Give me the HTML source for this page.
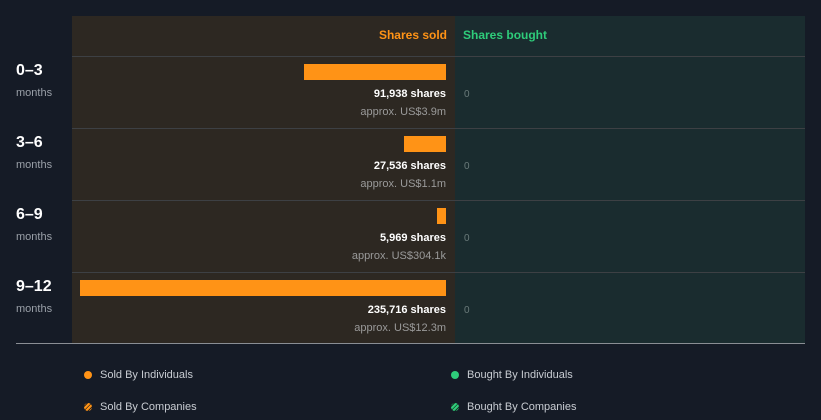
<!DOCTYPE html><html><head><style>
body{margin:0;width:821px;height:420px;background:#151b26;font-family:"Liberation Sans",sans-serif;position:relative;overflow:hidden}
div,span{position:absolute}
.t{white-space:nowrap}
.sold{left:72px;top:16px;width:383px;height:327px;background:#2d2822}
.bought{left:455px;top:16px;width:350px;height:327px;background:#1a2c2f}
.lnl{left:72px;width:733px;height:1px;background:#3d4044}
.bar{background:#ff9316;height:16px}
.sh{right:375px;font-size:11px;color:#fff;font-weight:bold}
.ap{right:375px;font-size:11px;color:#9a9a9a}
.z{left:464px;font-size:10px;color:#6a7a7a}
.lab{left:16px;font-size:16px;font-weight:bold;color:#fff}
.mo{left:16px;font-size:11px;color:#9aa0a8}
.lg{font-size:11px;color:#c8ccd2}
.dot{width:8px;height:8px;border-radius:50%}
</style></head><body>
<div class="sold"></div><div class="bought"></div>
<div class="t" style="right:374px;top:28px;font-size:12px;font-weight:bold;color:#ff9316">Shares sold</div>
<div class="t" style="left:463px;top:28px;font-size:12px;font-weight:bold;color:#2ecc7a">Shares bought</div>
<div class="lnl" style="top:56px"></div><div class="lnl" style="top:128px"></div><div class="lnl" style="top:200px"></div><div class="lnl" style="top:272px"></div>
<div style="left:16px;top:343px;width:789px;height:1px;background:#8a8e94"></div>

<div class="t lab" style="top:62px">0–3</div><div class="t mo" style="top:87px">months</div>
<div class="bar" style="left:304px;width:142px;top:64px"></div>
<div class="t sh" style="top:88px">91,938 shares</div><div class="t ap" style="top:106px">approx. US$3.9m</div><div class="t z" style="top:89px">0</div>

<div class="t lab" style="top:134px">3–6</div><div class="t mo" style="top:159px">months</div>
<div class="bar" style="left:404px;width:42px;top:136px"></div>
<div class="t sh" style="top:160px">27,536 shares</div><div class="t ap" style="top:178px">approx. US$1.1m</div><div class="t z" style="top:161px">0</div>

<div class="t lab" style="top:206px">6–9</div><div class="t mo" style="top:231px">months</div>
<div class="bar" style="left:437px;width:9px;top:208px"></div>
<div class="t sh" style="top:232px">5,969 shares</div><div class="t ap" style="top:250px">approx. US$304.1k</div><div class="t z" style="top:233px">0</div>

<div class="t lab" style="top:278px">9–12</div><div class="t mo" style="top:303px">months</div>
<div class="bar" style="left:80px;width:366px;top:280px"></div>
<div class="t sh" style="top:304px">235,716 shares</div><div class="t ap" style="top:322px">approx. US$12.3m</div><div class="t z" style="top:305px">0</div>

<div class="dot" style="left:84px;top:371px;background:#ff9316"></div><div class="t lg" style="left:100px;top:369px">Sold By Individuals</div>
<div class="dot" style="left:451px;top:371px;background:#2ecc7a"></div><div class="t lg" style="left:467px;top:369px">Bought By Individuals</div>
<div class="dot" style="left:84px;top:403px;background:repeating-linear-gradient(135deg,#ff9316 0 2px,#3a2a18 2px 3px)"></div><div class="t lg" style="left:100px;top:401px">Sold By Companies</div>
<div class="dot" style="left:451px;top:403px;background:repeating-linear-gradient(135deg,#2ecc7a 0 2px,#183a28 2px 3px)"></div><div class="t lg" style="left:467px;top:401px">Bought By Companies</div>
</body></html>
